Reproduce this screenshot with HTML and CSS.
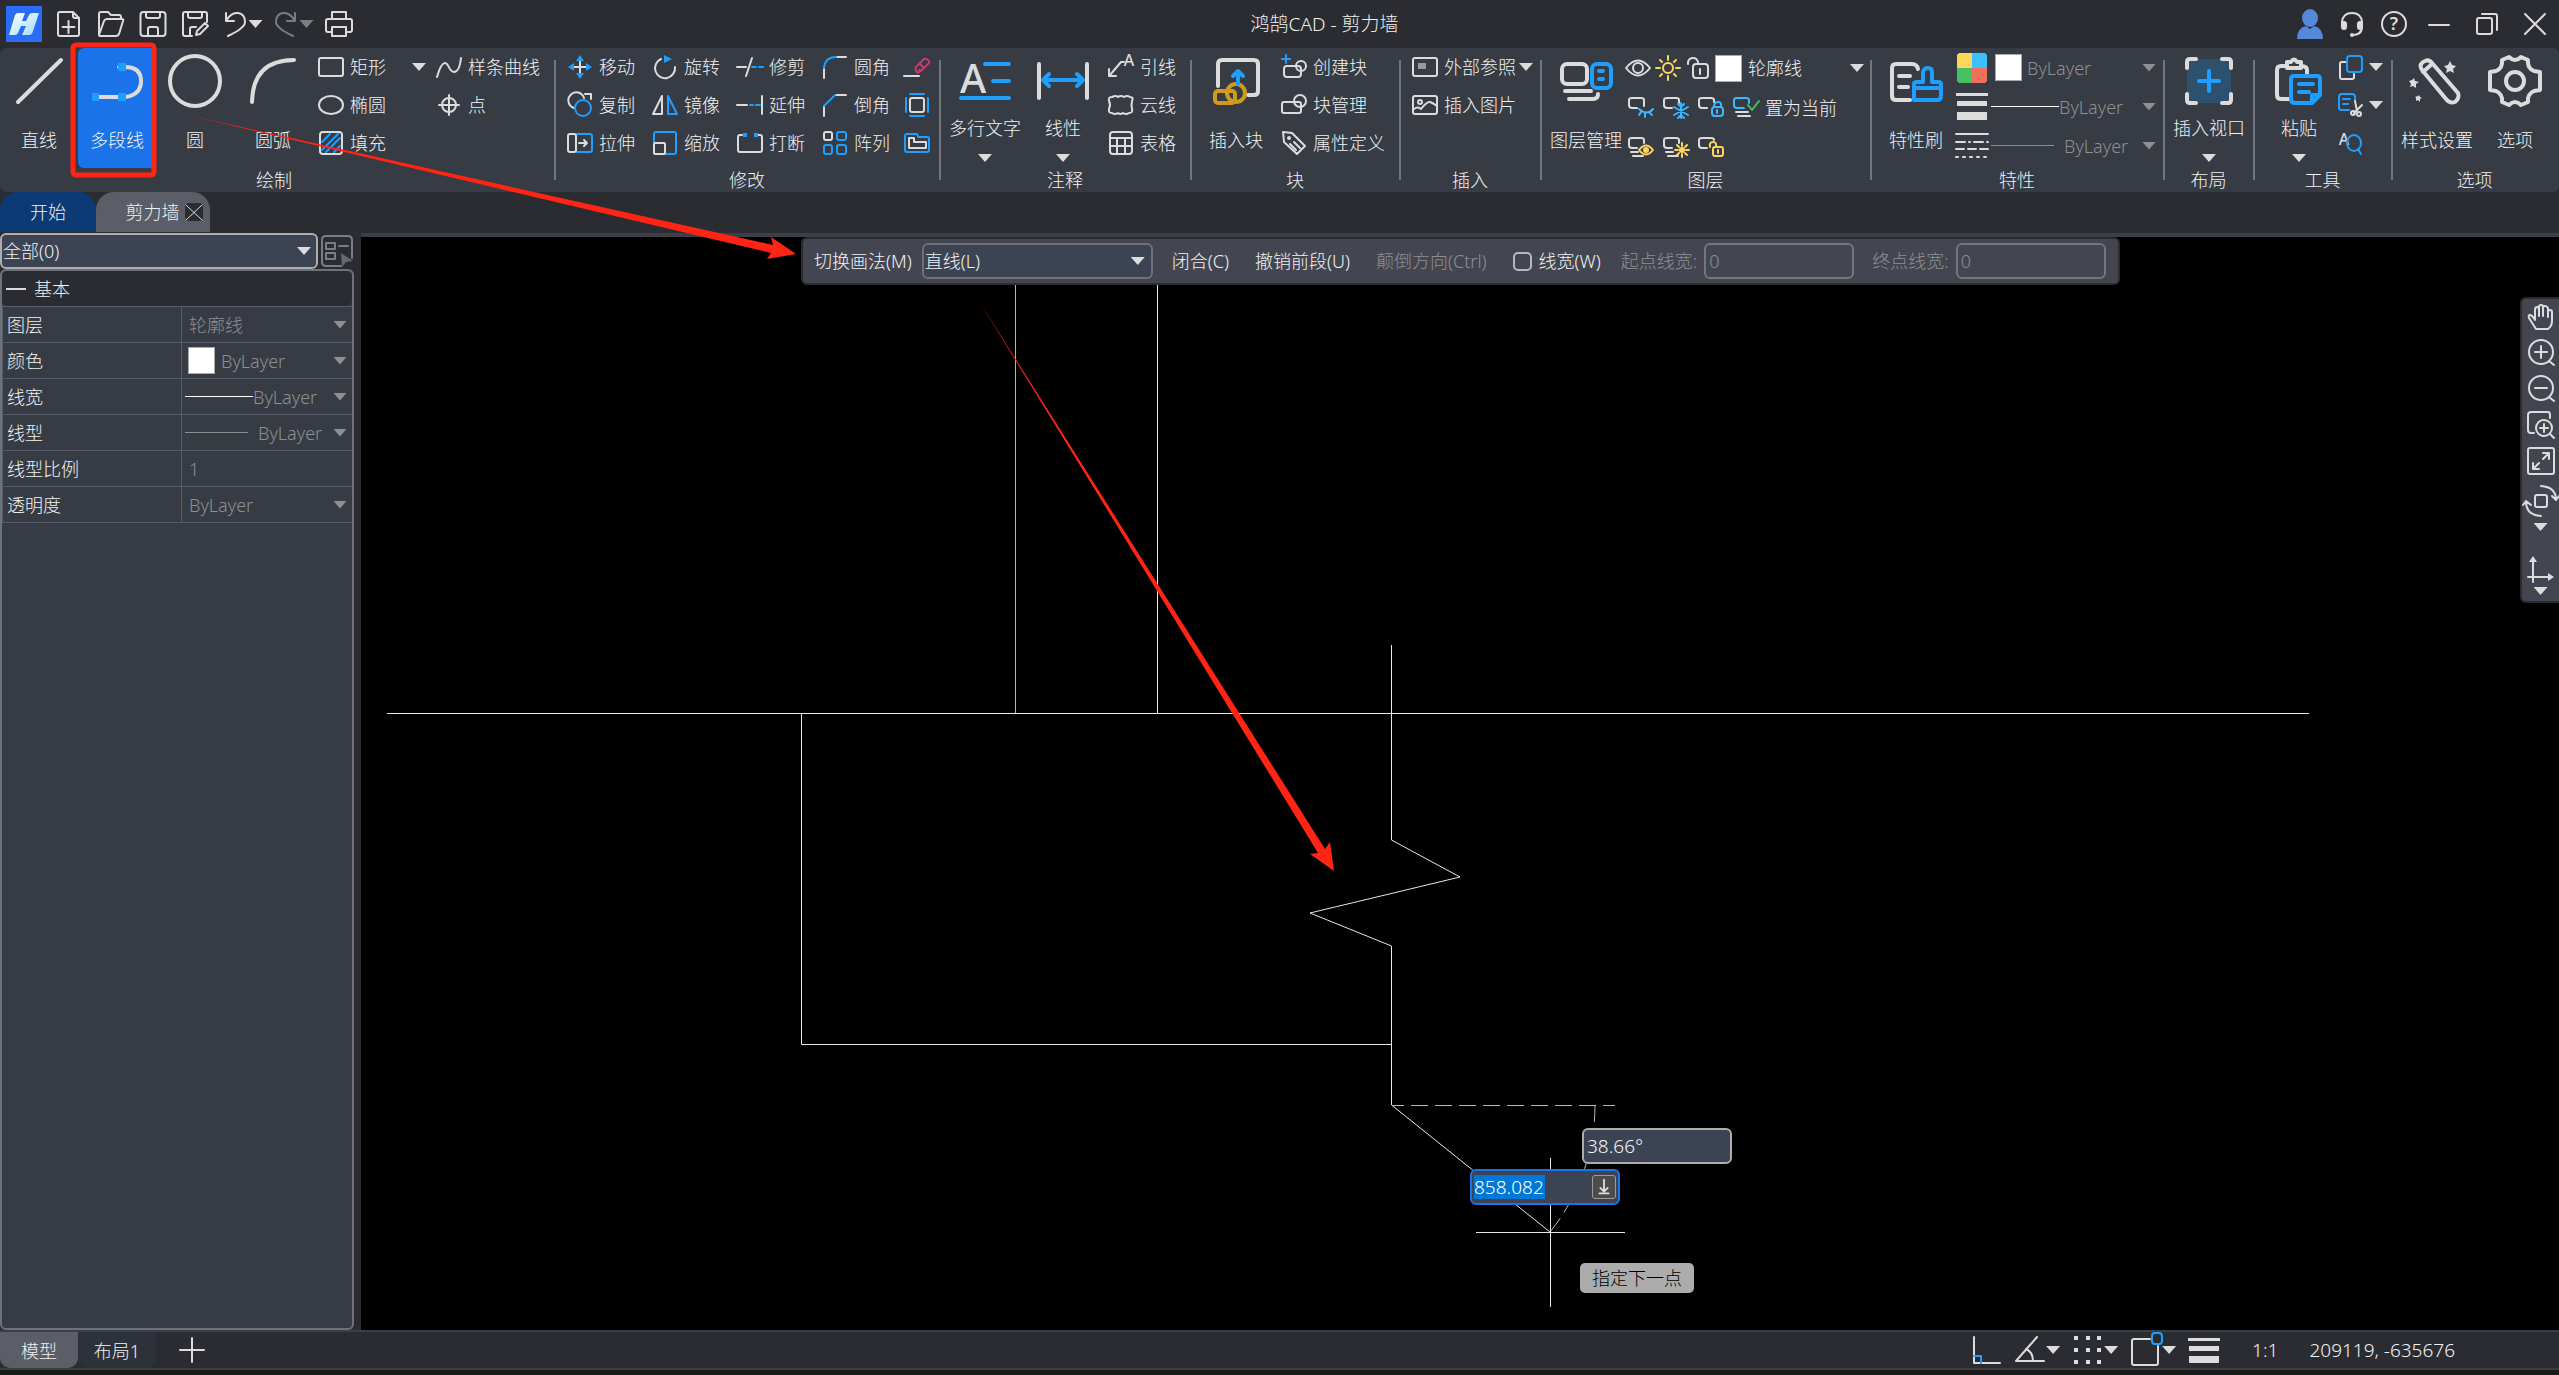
FILE: index.html
```html
<!DOCTYPE html>
<html lang="zh-CN">
<head>
<meta charset="utf-8">
<title>鸿鹄CAD - 剪力墙</title>
<link rel="stylesheet" href="styles.css">
</head>
<body>
<div class="app">
  <header class="titlebar">
    <div class="quick">
      <svg class="logo" viewBox="0 0 36 36"><defs><linearGradient id="lg" x1="0" y1="0" x2="1" y2="1"><stop offset="0" stop-color="#fff"/><stop offset="1" stop-color="#9fdcf8"/></linearGradient></defs><rect width="36" height="36" fill="#2a6cf6"/><path fill="url(#lg)" d="M9 9q1-2 3-2h7l-3 8h4l3-6q1-2 3-2h7l-6 18q-1 4-4 4h-7l4-9h-5l-3 7q-1 2-3 2H3l3-10z"/></svg>
      <button class="qb q42" aria-label="新建"><svg class="i28" viewBox="0 0 28 28"><path d="M5 2h13l6 6v16q0 2-2 2H5q-2 0-2-2V4q0-2 2-2zM18 2v4q0 2 2 2h4M13.500 11v12M7.500 17h12"/></svg></button>
      <button class="qb q42" aria-label="打开"><svg class="i28" viewBox="0 0 28 28"><path d="M2 24V4q0-2 2-2h7l3 3h8q2 0 2 2v2M2 25l5-14q1-2 3-2h15q2 0 1 2l-4 13q-1 2-3 2H4q-2 0-2-1z"/></svg></button>
      <button class="qb q42" aria-label="保存"><svg class="i28" viewBox="0 0 28 28"><rect x="1.500" y="2" width="25" height="24" rx="3"/><path d="M7 2v4q0 2 2 2h10q2 0 2-2V2M9 26v-7q0-2 2-2h6q2 0 2 2v7"/></svg></button>
      <button class="qb q42" aria-label="另存为"><svg class="i28" viewBox="0 0 28 28"><path d="M11 26H4q-2 0-2-2V4q0-2 2-2h20q2 0 2 2v8M7 2v4q0 2 2 2h10q2 0 2-2V2M9 26v-7q0-2 2-2h4M15 25l1-4 8-8 3 3-8 8z"/></svg></button>
      <button class="qb undo" aria-label="撤销"><svg class="i28" viewBox="0 0 28 28"><path d="M5 3v8h8M5 11Q10 2 17 3q7 1 7 9 0 6-17 14"/></svg><span class="tri"></span></button>
      <button class="qb redo" aria-label="重做"><svg class="i28" viewBox="0 0 28 28"><path d="M23 3v8h-8M23 11Q18 2 11 3q-7 1-7 9 0 6 17 14"/></svg><span class="tri"></span></button>
      <button class="qb q42" aria-label="打印"><svg class="i28" viewBox="0 0 28 28"><path d="M7 8V2h14v6M7 22H3q-2 0-2-2v-9q0-2 2-2h22q2 0 2 2v9q0 2-2 2h-4M7 17h14v9H7z"/></svg></button>
    </div>
    <h1 class="title">鸿鹄CAD - 剪力墙</h1>
    <div class="window">
      <button class="qb q42" aria-label="账户"><svg class="i32" viewBox="0 0 32 32"><ellipse class="user" cx="16" cy="10" rx="8" ry="9"/><path class="user" d="M3 31q0-11 9-13l4 3 4-3q9 2 9 13z"/></svg></button>
      <button class="qb q42" aria-label="客服"><svg class="i28" viewBox="0 0 28 28"><path d="M4 14v-2Q5 3 14 3t10 9v2M24 18q-1 7-9 7"/><rect class="lf" x="3" y="11" width="6" height="9" rx="3"/><rect class="lf" x="19" y="11" width="6" height="9" rx="3"/><circle class="lf" cx="14" cy="25" r="2"/></svg></button>
      <button class="qb q42" aria-label="帮助"><svg class="i28" viewBox="0 0 28 28"><circle cx="14" cy="14" r="12"/><text x="14" y="20" class="q">?</text></svg></button>
      <button class="qb q48" aria-label="最小化"><svg class="i28" viewBox="0 0 28 28"><path d="M4 15h20"/></svg></button>
      <button class="qb q48" aria-label="还原"><svg class="i28" viewBox="0 0 28 28"><rect x="4" y="8" width="15" height="16" rx="2"/><path d="M9 4h13q2 0 2 2v14"/></svg></button>
      <button class="qb q48" aria-label="关闭"><svg class="i28" viewBox="0 0 28 28"><path d="M4 4l20 20M24 4L4 24"/></svg></button>
    </div>
  </header>

  <div class="ribbon">
    <section class="group g-draw">
      <div class="body">
        <button class="big"><svg viewBox="0 0 56 56"><path d="M7 49L50 7"/></svg>直线</button>
        <button class="big active"><svg viewBox="0 0 56 56"><path d="M6 44h30q16-2 16-16T36 14h-6"/><path class="bf" d="M3 40h7v8H3zM29 40h8v8h-8zM29 10h8v8h-8z"/></svg>多段线</button>
        <button class="big"><svg viewBox="0 0 56 56"><circle cx="28" cy="28" r="25"/></svg>圆</button>
        <button class="big"><svg viewBox="0 0 56 56"><path d="M7 49Q8 7 49 7"/></svg>圆弧</button>
        <div class="stack after">
          <button class="sm"><svg viewBox="0 0 26 26"><rect x="1" y="4" width="24" height="18" rx="2"/></svg>矩形</button>
          <button class="sm"><svg viewBox="0 0 26 26"><ellipse cx="13" cy="13" rx="12" ry="9"/></svg>椭圆</button>
          <button class="sm"><svg viewBox="0 0 26 26"><rect x="2" y="2" width="22" height="22" rx="3"/><path class="b" d="M4 12l8-8M4 20L20 4M8 22L22 8M16 22l6-6"/></svg>填充</button>
        </div>
        <div class="stack mid"><button class="drop" aria-label="更多矩形"><span class="tri"></span></button></div>
        <div class="stack">
          <button class="sm"><svg viewBox="0 0 26 26"><path d="M1 23Q5 9 9 9c4 0 4 9 9 9 4 0 6-5 7-14"/></svg>样条曲线</button>
          <button class="sm"><svg viewBox="0 0 26 26"><circle cx="13" cy="13" r="7"/><path d="M13 3v20M3 13h20"/></svg>点</button>
        </div>
      </div>
      <h2>绘制</h2>
    </section>

    <section class="group g-modify">
      <div class="body">
        <div class="grid4">
          <button class="sm"><svg viewBox="0 0 26 26"><path d="M13 5v16M5 13h16"/><path class="bf" d="M13 1l4 6H9zM13 25l4-6H9zM1 13l6-4v8zM25 13l-6-4v8z"/></svg>移动</button>
          <button class="sm"><svg viewBox="0 0 26 26"><path d="M9 5A10 10 0 1 0 23 13"/><path class="bf" d="M12 1l8 4-8 4z"/></svg>旋转</button>
          <button class="sm"><svg viewBox="0 0 26 26"><path d="M0 13h9M15 4L9 22"/><path class="b" d="M15 13h4M22 13h4"/></svg>修剪</button>
          <button class="sm"><svg viewBox="0 0 26 26"><path d="M2 24V14M14 3h10"/><path class="b" d="M2 14Q3 3 14 3"/></svg>圆角</button>
          <button class="sm" aria-label="删除"><svg viewBox="0 0 26 26"><path d="M0 22h15"/><path class="pk" d="M12 13l8-8q3-1 5 2v2l-8 8q-4 3-5 0-1-2 0-4zM16 10l4 4M15 16h1"/></svg></button>
          <button class="sm"><svg viewBox="0 0 26 26"><path d="M7 16A8 8 0 1 1 17 6M18 2h6v5"/><circle class="b" cx="16" cy="16" r="8"/></svg>复制</button>
          <button class="sm"><svg viewBox="0 0 26 26"><path d="M10 4v18H1z"/><path class="b" d="M16 4v18h9z"/></svg>镜像</button>
          <button class="sm"><svg viewBox="0 0 26 26"><path d="M0 13h10M25 4v18"/><path class="b" d="M13 13h3M19 13h4"/></svg>延伸</button>
          <button class="sm"><svg viewBox="0 0 26 26"><path d="M2 24V14M14 3h10"/><path class="b" d="M2 14L13 3"/></svg>倒角</button>
          <button class="sm" aria-label="缩放框"><svg viewBox="0 0 26 26"><rect x="6" y="6" width="14" height="14" rx="2"/><path class="b" d="M6 2h14M6 24h14M2 6v14M24 6v14"/></svg></button>
          <button class="sm"><svg viewBox="0 0 26 26"><path class="b" d="M10 4h13q2 0 2 2v14q0 2-2 2H10"/><rect x="1" y="4" width="8" height="18" rx="2"/><path d="M12 13h8M17 10l3 3-3 3"/></svg>拉伸</button>
          <button class="sm"><svg viewBox="0 0 26 26"><path class="b" d="M2 12V4q0-2 2-2h18q2 0 2 2v18q0 2-2 2h-8"/><rect x="2" y="13" width="11" height="11" rx="1"/></svg>缩放</button>
          <button class="sm"><svg viewBox="0 0 26 26"><path d="M5 5H3Q1 5 1 7v13q0 2 2 2h20q2 0 2-2V7q0-2-2-2h-2"/><path class="bf" d="M6 3h4v4H6zM17 3h4v4h-4z"/></svg>打断</button>
          <button class="sm"><svg viewBox="0 0 26 26"><rect x="2" y="2" width="8" height="8" rx="2"/><rect class="b" x="15" y="2" width="9" height="8" rx="2"/><rect class="b" x="2" y="15" width="8" height="9" rx="2"/><rect class="b" x="15" y="15" width="9" height="9" rx="2"/></svg>阵列</button>
          <button class="sm" aria-label="偏移"><svg viewBox="0 0 26 26"><path class="b" d="M1 6q0-2 2-2h9q2 0 2 3h9q2 0 2 2v11q0 2-2 2H3q-2 0-2-2z"/><path d="M5 8h5v4h12v6H5z"/></svg></button>
        </div>
      </div>
      <h2>修改</h2>
    </section>

    <section class="group g-note">
      <div class="body">
        <button class="big arrow"><svg viewBox="0 0 56 56"><text class="bigA" x="16" y="40">A</text><path class="b" d="M28 11h24M36 28h16M4 45h48"/></svg>多行文字<span class="tri"></span></button>
        <button class="big arrow"><svg viewBox="0 0 56 56"><path d="M4 11v34M52 11v34"/><path class="b" d="M9 27h38M14 21l-6 6 6 6M42 21l6 6-6 6"/></svg>线性<span class="tri"></span></button>
        <div class="stack after">
          <button class="sm"><svg viewBox="0 0 26 26"><path d="M1 15v7h7M2 21L13 8h3"/><text class="smA" x="21" y="12">A</text></svg>引线</button>
          <button class="sm"><svg viewBox="0 0 26 26"><path d="M4 5q4-2 6 0 3-2 6 0 3-2 6 0 4 0 2 4-1 4 0 8 1 4-3 4-3 2-6 0-3 2-5 0-3 2-6 0-4 0-3-4 2-4 0-8-1-4 3-4z"/></svg>云线</button>
          <button class="sm"><svg viewBox="0 0 26 26"><rect x="2" y="2" width="22" height="22" rx="3"/><path d="M2 8h22M2 16h22M9 8v16M17 8v16"/></svg>表格</button>
        </div>
      </div>
      <h2>注释</h2>
    </section>

    <section class="group g-block">
      <div class="body">
        <button class="big"><svg viewBox="0 0 56 56"><path d="M10 33V11q0-4 4-4h32q4 0 4 4v27q0 4-4 4h-6"/><g class="gd"><rect x="7" y="38" width="20" height="12" rx="3"/><circle cx="28" cy="40" r="9"/></g><path class="b" d="M30 31V19M25 23l5-5 5 5"/></svg>插入块</button>
        <div class="stack after">
          <button class="sm"><svg viewBox="0 0 26 26"><path class="b" d="M5 1v8M1 5h8"/><rect x="3" y="12" width="17" height="11" rx="3"/><circle cx="20" cy="12" r="5"/></svg>创建块</button>
          <button class="sm"><svg viewBox="0 0 26 26"><rect x="1" y="10" width="19" height="11" rx="2"/><circle cx="19" cy="9" r="6"/></svg>块管理</button>
          <button class="sm"><svg viewBox="0 0 26 26"><path d="M2 2l9 1 13 13-8 8L3 12zM9 14l6 6M13 12l6 6"/><circle class="lf" cx="8" cy="8" r="2"/></svg>属性定义</button>
        </div>
      </div>
      <h2>块</h2>
    </section>

    <section class="group g-insert">
      <div class="body">
        <div class="stack">
          <button class="sm"><svg viewBox="0 0 26 26"><rect x="1" y="4" width="24" height="18" rx="2"/><path class="gf" d="M6 9h8v6H6z"/></svg>外部参照<span class="tri"></span></button>
          <button class="sm"><svg viewBox="0 0 26 26"><rect x="1" y="4" width="24" height="18" rx="2"/><circle cx="8" cy="10" r="2"/><path d="M2 17q4-3 7 0 6-8 9-7t7 4"/></svg>插入图片</button>
        </div>
      </div>
      <h2>插入</h2>
    </section>

    <section class="group g-layer">
      <div class="body">
        <button class="big"><svg viewBox="0 0 56 56"><rect x="4" y="11" width="25" height="20" rx="5"/><rect class="b" x="34" y="11" width="19" height="24" rx="5"/><path class="b" d="M41 18h4M41 26h4"/><path d="M7 38h26M11 46h24q5 0 5-5"/></svg>图层管理</button>
        <div class="rows">
          <div class="row">
            <button class="ic ic30" aria-label="显示"><svg viewBox="0 0 26 26"><path d="M1 13Q13-2 25 13 13 28 1 13z"/><circle cx="13" cy="13" r="5"/></svg></button>
            <button class="ic ic30" aria-label="冻结"><svg viewBox="0 0 26 26"><g class="yl"><circle cx="13" cy="13" r="5"/><path d="M13 1v4M13 21v4M1 13h4M21 13h4M5 5l2 2M19 19l2 2M5 21l2-2M19 7l2-2"/></g></svg></button>
            <button class="ic ic30" aria-label="锁定"><svg viewBox="0 0 26 26"><rect x="8" y="9" width="15" height="14" rx="3"/><path d="M3 9V7q1-4 5-4t5 4v2M15 14v5"/></svg></button>
            <span class="swatch"></span>
            <select class="flat" aria-label="图层"><option>轮廓线</option></select><span class="tri"></span>
          </div>
          <div class="row inset">
            <button class="ic ic35" aria-label="隐藏图层"><svg viewBox="0 0 26 26"><path d="M9 13H4q-3 0-3-3V5q0-2 3-2h9q3 0 3 2v6"/><path class="c" d="M11 14q8 7 14 0M13 17l-2 3M17 18v4M21 17l3 3"/></svg></button>
            <button class="ic ic35" aria-label="冻结图层"><svg viewBox="0 0 26 26"><path d="M9 13H4q-3 0-3-3V5q0-2 3-2h9q3 0 3 2v3"/><path class="c" d="M18 8v15M11 12l14 8M11 20l14-8M15 9l3 3 3-3M15 23l3-3 3 3"/></svg></button>
            <button class="ic ic35" aria-label="锁定图层"><svg viewBox="0 0 26 26"><path d="M9 13H4q-3 0-3-3V5q0-2 3-2h9q3 0 3 2v2"/><g class="c"><rect x="14" y="12" width="11" height="9" rx="3"/><path d="M16 12q0-5 4-5t3 5M19 15v3"/></g></svg></button>
            <button class="sm"><svg viewBox="0 0 26 26"><path class="c" d="M11 13H4q-3 0-3-3V5q0-2 3-2h9q3 0 3 2v3"/><path d="M3 17h12M5 21h12"/><path class="gn" d="M15 10l4 5 7-9"/></svg>置为当前</button>
          </div>
          <div class="row inset">
            <button class="ic ic35" aria-label="显示图层"><svg viewBox="0 0 26 26"><path d="M9 13H4q-3 0-3-3V5q0-2 3-2h9q3 0 3 2v3M3 17h7M5 21h10"/><path class="yl" d="M11 15q7-9 14 0-7 9-14 0z"/><circle class="yf" cx="18" cy="15" r="3"/></svg></button>
            <button class="ic ic35" aria-label="解冻图层"><svg viewBox="0 0 26 26"><path d="M9 13H4q-3 0-3-3V5q0-2 3-2h9q3 0 3 2v3M3 17h7M5 21h10"/><circle class="yf" cx="19" cy="15" r="3"/><path class="yl" d="M19 8v3M19 19v3M12 15h3M23 15h3M14 10l2 2M22 18l2 2M14 20l2-2M22 12l2-2"/></svg></button>
            <button class="ic ic35" aria-label="解锁图层"><svg viewBox="0 0 26 26"><path d="M9 13H4q-3 0-3-3V5q0-2 3-2h9q3 0 3 2"/><g class="yl"><rect x="15" y="12" width="10" height="9" rx="2"/><path d="M12 12q-1-5 3-5t3 5M20 15v3"/></g></svg></button>
          </div>
        </div>
      </div>
      <h2>图层</h2>
    </section>

    <section class="group g-prop">
      <div class="body">
        <button class="big"><svg viewBox="0 0 56 56"><path d="M22 47H8q-4 0-4-4V15q0-4 4-4h16q5 0 6 5M11 23h11M11 34h9"/><path class="b" d="M26 47V31q0-2 3-2h6V19q1-4 5-4t4 4v10h6q3 0 3 2v12q0 4-4 4zM27 35h25"/></svg>特性刷</button>
        <div class="rows">
          <div class="row">
            <svg class="pi tiles" viewBox="0 0 34 34"><path fill="#ffd65c" d="M4 2h13v15H2V4z"/><path fill="#3cc0ff" d="M17 2h13l2 2v13H17z"/><path fill="#45c064" d="M2 17h15v15H4l-2-2z"/><path fill="#f0705a" d="M17 17h15v13l-2 2H17z"/></svg>
            <span class="swatch"></span>
            <select class="flat off" aria-label="颜色"><option>ByLayer</option></select><span class="tri dim"></span>
          </div>
          <div class="row">
            <svg class="pi" viewBox="0 0 34 34"><path class="lf" d="M1 3h32v3H1zM2 11h30v5H2zM2 22h30v8H2z"/></svg>
            <span class="rule"></span>
            <select class="flat off" aria-label="线宽"><option>ByLayer</option></select><span class="tri dim"></span>
          </div>
          <div class="row">
            <svg class="pi" viewBox="0 0 34 34"><path d="M1 5h32"/><path stroke-dasharray="9 4 1 4" d="M1 13h32"/><path stroke-dasharray="8 4" d="M1 20h32"/><path stroke-dasharray="2 5" d="M1 28h32"/></svg>
            <span class="rule gray"></span>
            <select class="flat off" aria-label="线型"><option>ByLayer</option></select><span class="tri dim"></span>
          </div>
        </div>
      </div>
      <h2>特性</h2>
    </section>

    <section class="group g-layout">
      <div class="body">
        <button class="big arrow"><svg viewBox="0 0 56 56"><rect class="bt" x="6" y="6" width="44" height="44"/><path d="M6 15V9q0-3 3-3h6M41 6h6q3 0 3 3v6M50 41v6q0 3-3 3h-6M15 50H9q-3 0-3-3v-6"/><path class="b" d="M28 18v20M18 28h20"/></svg>插入视口<span class="tri"></span></button>
      </div>
      <h2>布局</h2>
    </section>

    <section class="group g-tool">
      <div class="body">
        <button class="big arrow"><svg viewBox="0 0 56 56"><path d="M18 46H10q-4 0-4-4V17q0-4 4-4h4M30 13q6 0 6 4v3"/><path d="M16 9v6h14V9h-4q-3-5-6 0z"/><path class="b" d="M20 46V26q0-3 3-3h23q3 0 3 3v16l-8 8H24q-4 0-4-4zM28 31h14M28 39h10M49 42h-8v8"/></svg>粘贴<span class="tri"></span></button>
        <div class="stack">
          <button class="sm tight" aria-label="复制选项"><svg viewBox="0 0 26 26"><path d="M8 8H4Q2 8 2 10v13q0 2 2 2h10q2 0 2-2v-3"/><rect class="b" x="9" y="2" width="15" height="16" rx="3"/></svg><span class="tri"></span></button>
          <button class="sm tight" aria-label="剪切选项"><svg viewBox="0 0 26 26"><path class="b" d="M11 18H4q-3 0-3-2V5q0-3 3-3h10q3 0 3 3v4M5 7h7M5 12h5"/><path d="M17 9l2 10M24 13l-8 8"/><circle cx="15" cy="21" r="2"/><circle cx="21" cy="22" r="2"/></svg><span class="tri"></span></button>
          <button class="sm tight" aria-label="查找文字"><svg viewBox="0 0 26 26"><text class="smA" x="6" y="15">A</text><ellipse class="b" cx="16" cy="13" rx="7" ry="8"/><path class="b" d="M20 19l3 5"/></svg></button>
        </div>
      </div>
      <h2>工具</h2>
    </section>

    <section class="group g-opt">
      <div class="body">
        <button class="big"><svg viewBox="0 0 56 56"><path d="M13 17q-4-6 3-9 4-2 7 2l26 30q2 5-3 9-5 2-9-3zM14 19l9-8"/><path class="lf" d="M41 8l2 4 4 1-3 3 1 4-4-2-4 2 1-4-3-3 4-1zM5 25l1 3 4 1-3 2v4l-3-2-3 1 1-3-2-3 3-1zM10 42l1 2 2 1-2 1v3l-2-2-2 1v-3l-1-1 3-1z"/></svg>样式设置</button>
        <button class="big"><svg viewBox="0 0 56 56"><path d="M22 4q6 6 12 0l7 3q-1 8 6 11l6 1v18l-6 1q-7 3-6 11l-7 3q-6-6-12 0l-7-3q1-8-6-11l-6-1V19l6-1q7-3 6-11z"/><circle cx="28" cy="28" r="9"/></svg>选项</button>
      </div>
      <h2>选项</h2>
    </section>
  </div>

  <nav class="tabs">
    <a class="tab home" href="#start">开始</a>
    <a class="tab doc" href="#doc">剪力墙<svg class="x" viewBox="0 0 18 18"><rect width="18" height="18" rx="4"/><path d="M1 2l16 15M17 2L1 17"/></svg></a>
  </nav>

  <main class="work">
    <aside class="side">
      <div class="pick">
        <div class="box all"><select aria-label="选择对象"><option>全部(0)</option></select><span class="tri"></span></div>
        <button class="pickbtn" aria-label="快速选择"><svg viewBox="0 0 32 32"><path d="M20 31H5q-4 0-4-4V5q0-4 4-4h22q4 0 4 4v18M5 8h9v6H5zM5 18h9v6H5zM18 11h9"/><path class="cur" d="M20 18l12 8-7 1-4 5z"/></svg></button>
      </div>
      <div class="props">
        <h3><span class="minus"></span>基本</h3>
        <table>
          <tr><th scope="row">图层</th><td><div class="cell ind"><select class="flat off" aria-label="图层"><option>轮廓线</option></select><span class="tri dim"></span></div></td></tr>
          <tr><th scope="row">颜色</th><td><div class="cell"><span class="swatch first"></span><select class="flat off" aria-label="颜色"><option>ByLayer</option></select><span class="tri dim"></span></div></td></tr>
          <tr><th scope="row">线宽</th><td><div class="cell"><span class="rule"></span><select class="flat off" aria-label="线宽"><option>ByLayer</option></select><span class="tri dim"></span></div></td></tr>
          <tr><th scope="row">线型</th><td><div class="cell"><span class="rule gray"></span><select class="flat off" aria-label="线型"><option>ByLayer</option></select><span class="tri dim"></span></div></td></tr>
          <tr><th scope="row">线型比例</th><td><div class="cell ind"><input class="flat off" aria-label="线型比例" value="1"></div></td></tr>
          <tr><th scope="row">透明度</th><td><div class="cell ind"><select class="flat off" aria-label="透明度"><option>ByLayer</option></select><span class="tri dim"></span></div></td></tr>
        </table>
      </div>
    </aside>

    <div class="canvas">
      <svg class="drawing" aria-hidden="true">
        <g transform="translate(-361 -237)">
          <path d="M387 713.500H2309M1157.500 237V713M801.500 713V1044.500H1391.500M1391.500 645V840L1460 877 1310 913 1391.500 946V1105L1550 1232"/>
          <path class="half" d="M1015.500 237V713"/>
          <path class="dash" stroke-dashoffset="5" d="M1392 1105.500H1615"/>
          <path class="dash" d="M1595 1105A203 203 0 0 1 1550 1232"/>
          <path d="M1550.500 1158V1307M1476 1232.500H1625"/>
        </g>
      </svg>

      <form class="cmd">
        <label for="mode">切换画法(M)</label>
        <div class="box mode"><select id="mode"><option>直线(L)</option></select><span class="tri"></span></div>
        <button type="button" class="txt">闭合(C)</button>
        <button type="button" class="txt">撤销前段(U)</button>
        <button type="button" class="txt" disabled>颠倒方向(Ctrl)</button>
        <input type="checkbox" id="lw"><label for="lw" class="lw">线宽(W)</label>
        <label class="off" for="w1">起点线宽:</label><input class="num" id="w1" value="0" disabled>
        <label class="off" for="w2">终点线宽:</label><input class="num" id="w2" value="0" disabled>
      </form>

      <div class="view">
        <button aria-label="平移"><svg viewBox="0 0 28 28"><path d="M9 26L2 15q-1-3 1-3t5 5V7q0-3 2-3t2 3v6V4q0-2 2-2t2 2v9V5q0-2 2-2t3 2v9V9q0-2 2-2t2 2v9q0 5-4 8z"/></svg></button>
        <button aria-label="放大"><svg viewBox="0 0 28 28"><circle cx="14" cy="13" r="12"/><path d="M14 7v12M8 13h12M22 22l5 4"/></svg></button>
        <button aria-label="缩小"><svg viewBox="0 0 28 28"><circle cx="14" cy="13" r="12"/><path d="M8 13h12M22 22l5 4"/></svg></button>
        <button aria-label="窗口缩放"><svg viewBox="0 0 28 28"><path d="M7 22H4q-3 0-3-3V4q0-3 3-3h17q2 0 2 3v3"/><circle cx="17" cy="17" r="8"/><path d="M17 13v8M13 17h8M23 23l4 4"/></svg></button>
        <button aria-label="全图"><svg viewBox="0 0 28 28"><rect x="1" y="1" width="26" height="26" rx="2"/><path d="M16 6h6v6M22 6l-6 6M6 16v6h6M6 22l6-6"/></svg></button>
        <button class="tall" aria-label="旋转视图"><svg class="wide" viewBox="0 0 36 36"><rect x="12" y="12" width="12" height="12" rx="2"/><path d="M18 3q15 1 15 14M29 13l4 4 3-4M18 33Q3 32 3 19M0 22l3-4 5 4"/></svg><span class="tri"></span></button>
        <button class="tall low" aria-label="坐标系"><svg viewBox="0 0 28 28"><path d="M6 27V4M1 22h22"/><path class="lf" d="M6 1l4 6H2zM27 22l-6-4v8z"/></svg><span class="tri"></span></button>
      </div>

      <input class="angle" aria-label="角度" value="38.66°">
      <div class="dist"><input aria-label="距离" value="858.082"><button aria-label="选项"><svg viewBox="0 0 24 24"><path d="M12 4v13M8 13l4 4 4-4M7 19h10"/></svg></button></div>
      <div class="tip">指定下一点</div>
    </div>
  </main>

  <footer class="status">
    <nav class="sheets"><a class="on" href="#model">模型</a><a href="#layout1">布局1</a><button aria-label="新建布局"><svg viewBox="0 0 24 24"><path d="M12 0v24M0 12h24"/></svg></button></nav>
    <div class="modes">
      <button aria-label="正交"><svg viewBox="0 0 32 32"><path d="M3 3v26h26"/><path class="b" d="M3 22h7v7"/></svg></button>
      <button class="sp" aria-label="极轴"><svg viewBox="0 0 32 32"><path d="M23 3L2 27h28M12 15q7 3 7 12"/></svg><span class="tri"></span></button>
      <button class="sp" aria-label="栅格"><svg viewBox="0 0 32 32"><path class="lf" d="M2 2h4v4H2zM14 2h4v4h-4zM25 2h4v4h-4zM2 14h4v4H2zM14 14h4v4h-4zM25 14h4v4h-4zM2 26h4v4H2zM14 26h4v4h-4zM25 26h4v4h-4z"/></svg><span class="tri"></span></button>
      <button class="sp" aria-label="对象捕捉"><svg viewBox="0 0 32 32"><path d="M20 5H4Q2 5 2 7v22q0 2 2 2h22q2 0 2-2V12"/><rect class="b" x="22" y="-1" width="10" height="11" rx="3"/></svg><span class="tri"></span></button>
      <button aria-label="线宽"><svg viewBox="0 0 32 32"><path class="lf" d="M0 4h32v3H0zM1 12h30v5H1zM1 22h30v7H1z"/></svg></button>
      <span class="ratio">1:1</span>
      <output class="coord">209119, -635676</output>
    </div>
  </footer>
  <div class="edge"></div>

  <svg class="marks" aria-hidden="true">
    <rect x="73" y="45" width="81" height="130" rx="3"/>
    <path d="M183 114L773 245 771 237 796 254 767 259 771 253z"/>
    <path d="M979 301L1325 849 1330 842 1334 871 1310 854 1318 853z"/>
  </svg>
</div>
</body>
</html>
```
FILE: styles.css
```css
* { box-sizing: border-box; }

:root {
  --bar: #2b2c31;
  --panel: #363b44;
  --field: #3c4453;
  --float: #434650;
  --ink: #dcdcdc;
  --dim: #8d8f92;
  --blue: #1e9fff;
}

body {
  margin: 0;
  background: var(--bar);
  color: #f2f2f2;
  font: 300 18px/24px "Noto Sans", "Noto Sans CJK SC", sans-serif;
}

button, select, input {
  margin: 0;
  padding: 0;
  border: 0;
  background: none;
  color: inherit;
  font: inherit;
}

select { appearance: none; flex: 1; min-width: 0; height: 28px; }
select:disabled, button:disabled, input:disabled { color: var(--dim); opacity: 1; }
a { color: inherit; text-decoration: none; }
h1, h2, h3 { margin: 0; font: inherit; }

svg {
  display: block;
  flex: none;
  fill: none;
  stroke: var(--ink);
  stroke-width: 2;
  stroke-linecap: round;
  stroke-linejoin: round;
  overflow: visible;
}
.b { stroke: var(--blue); }
.c { stroke: #3cb8ff; }
.pk { stroke: #c83a6a; }
.gd { stroke: #d09a1c; }
.yl { stroke: #ffd65c; }
.gn { stroke: #45c064; }
.bf { fill: var(--blue); stroke: none; }
.lf { fill: var(--ink); stroke: none; }
.gf { fill: #9a9a9a; stroke: none; }
.yf { fill: #ffd65c; stroke: none; }
.bt { fill: #2d506e; stroke: none; }
.user { fill: #5488d8; stroke: none; }
svg text { fill: var(--ink); stroke: none; text-anchor: middle; font-family: "Noto Sans", sans-serif; }
.q { font-size: 18px; font-weight: 600; }
.bigA { font-size: 40px; font-weight: 500; }
.smA { font-size: 16px; font-weight: 500; }

.tri {
  flex: none;
  width: 14px;
  height: 8px;
  background: var(--ink);
  clip-path: polygon(0 0, 100% 0, 50% 100%);
}
.dim { background: var(--dim); }
.off { color: var(--dim); }

.app { position: relative; display: flex; flex-direction: column; min-height: 100vh; }

/* title bar */
.titlebar { display: flex; align-items: center; height: 48px; }
.quick { display: flex; align-items: center; padding-left: 6px; width: 360px; }
.logo { width: 36px; height: 36px; margin-right: 6px; stroke: none; }
.qb { display: flex; align-items: center; justify-content: center; height: 48px; }
.q42 { width: 42px; }
.q48 { width: 48px; }
.undo, .redo { width: 51px; }
.redo svg { stroke: #7b7d80; }
.redo .tri { background: #7b7d80; }
.i28 { width: 28px; height: 28px; }
.i32 { width: 32px; height: 32px; }
.title { flex: 1; text-align: center; font-size: 19px; }
.window { display: flex; }

/* ribbon */
.ribbon { display: flex; height: 144px; background: var(--panel); border-radius: 6px; }
.group { position: relative; display: flex; flex-direction: column; flex: none; }
.group::after {
  content: "";
  position: absolute;
  right: 0;
  top: 12px;
  width: 2px;
  height: 120px;
  background: #72757b;
}
.group:last-child::after { display: none; }
.group h2 { padding-right: 8px; text-align: center; }
.body { display: flex; height: 120px; }
.g-draw { width: 556px; }
.g-modify { width: 385px; padding-left: 11px; }
.g-note { width: 251px; padding-left: 5px; }
.g-block { width: 209px; padding-left: 5px; }
.g-insert { width: 141px; padding-left: 11px; }
.g-layer { width: 330px; padding-left: 5px; }
.g-prop { width: 293px; padding-left: 5px; }
.g-layout { width: 90px; padding-left: 5px; }
.g-tool { width: 138px; padding-left: 5px; }
.g-opt { flex: 1; padding-left: 5px; }
.g-modify h2, .g-insert h2 { padding-right: 14px; }

.big {
  display: flex;
  flex-direction: column;
  align-items: center;
  flex: none;
  width: 78px;
  height: 120px;
  padding-top: 5px;
  gap: 19px;
  white-space: nowrap;
}
.big svg { width: 56px; height: 56px; stroke-width: 4; }
.big.arrow { gap: 7px; }
.big .tri { margin-top: 7px; }
.active { background: #1a73e8; border-radius: 6px; }

.stack { display: flex; flex-direction: column; }
.after { padding-left: 6px; }
.sm { display: flex; align-items: center; gap: 6px; height: 38px; white-space: nowrap; }
.sm svg, .ic svg { width: 26px; height: 26px; }
.sm .tri { margin-left: -3px; }
.tight { gap: 5px; }
.tight .tri { margin-left: 0; }
.drop { display: flex; align-items: center; justify-content: center; height: 38px; width: 26px; }
.mid { margin: 0 4px 0 20px; }
.grid4 { display: grid; grid-template-columns: repeat(4, 85px) 26px; grid-auto-rows: 38px; }
.grid4 .sm:nth-child(5n) { margin-left: -3px; }

.rows { display: flex; flex-direction: column; flex: 1; }
.row { display: flex; align-items: center; height: 40px; padding-right: 8px; }
.inset { padding-left: 3px; }
.ic { display: flex; align-items: center; }
.ic30 { width: 30px; }
.ic35 { width: 35px; }
.swatch { flex: none; width: 27px; height: 27px; margin-right: 6px; background: #fff; border: 1px solid #aaa; }
.g-prop .row { height: 39px; padding-right: 9px; }
.g-prop .swatch { margin: 0 5px 0 4px; }
.pi { width: 34px; height: 34px; margin-right: 2px; }
.tiles { stroke: none; }
.rule { flex: none; width: 68px; height: 1px; background: #fff; }
.rule.gray { width: 63px; margin-right: 10px; background: #8c8f90; }

/* document tabs */
.tabs { display: flex; height: 41px; }
.tab { display: flex; align-items: center; justify-content: center; height: 40px; border-radius: 18px 18px 0 0; }
.home { width: 96px; background: #0b3a74; }
.doc { width: 114px; padding-left: 22px; gap: 5px; background: #5b5e66; }
.x { width: 18px; height: 18px; stroke-width: 1; }
.x rect { fill: var(--bar); stroke: none; }

/* properties panel */
.work { display: flex; flex: 1; }
.side { display: flex; flex-direction: column; width: 361px; padding-right: 7px; }
.pick { display: flex; align-items: center; gap: 3px; }
.box { display: flex; align-items: center; height: 36px; padding: 0 6px 0 1px; background: var(--field); border: 2px solid #707174; border-radius: 6px; }
.all { width: 318px; border-color: #adadad; padding-right: 5px; }
.pickbtn svg { width: 32px; height: 32px; stroke: #7b7d82; }
.cur { fill: #66686d; stroke: none; }
.props { flex: 1; background: var(--panel); border: 2px solid #6e727a; border-radius: 6px; }
.props h3 { display: flex; align-items: center; gap: 8px; height: 35px; padding-left: 4px; background: var(--bar); border-radius: 6px; }
.minus { width: 20px; height: 2px; background: var(--ink); }
.props table { width: 100%; border-collapse: collapse; table-layout: fixed; }
.props th, .props td { height: 36px; padding: 0; border: 1px solid #565c69; font-weight: 300; text-align: left; }
.props th { width: 179px; padding-left: 4px; }
.props td { border-right: 0; }
.cell { display: flex; align-items: center; padding: 0 5px 0 3px; }
.ind { padding-left: 7px; }
.cell .swatch { margin-left: 3px; }
.cell input { width: 100%; }

/* drawing area */
.canvas { position: relative; flex: 1; background: #000; border-top: 4px solid #3c3f47; }
.drawing { position: absolute; left: 0; top: 0; width: 100%; height: 100%; overflow: hidden; stroke: #e8e8e8; stroke-width: 1; stroke-linecap: butt; }
.half { stroke: #b4b4b4; }
.dash { stroke: #b8b8b8; stroke-dasharray: 17 7; }

.cmd {
  position: absolute;
  left: 440px;
  top: 0;
  display: flex;
  align-items: center;
  height: 48px;
  padding: 0 12px 0 11px;
  background: var(--float);
  border: 2px solid var(--bar);
  border-radius: 6px;
  white-space: nowrap;
}
.mode { width: 231px; margin: 0 19px 0 10px; }
.txt { margin-right: 26px; }
.cmd input[type="checkbox"] { appearance: none; width: 19px; height: 19px; margin-right: 7px; border: 2px solid #b8b8b8; border-radius: 5px; }
.lw { margin-right: 20px; }
.num { width: 150px; height: 36px; margin: 0 18px 0 7px; padding-left: 3px; border: 2px solid #74767c; border-radius: 6px; }
.num:last-child { margin-right: 0; }

.view {
  position: absolute;
  right: 0;
  top: 60px;
  display: flex;
  flex-direction: column;
  width: 39px;
  padding: 0 0 6px;
  background: var(--float);
  border: 2px solid var(--bar);
  border-right: 0;
  border-radius: 6px 0 0 6px;
}
.view button { display: flex; flex-direction: column; align-items: center; justify-content: center; height: 36px; }
.view svg { width: 28px; height: 28px; }
.view .wide { width: 36px; height: 36px; }
.view .tall { height: 56px; gap: 4px; }
.view .low { height: 60px; justify-content: flex-end; }

.angle, .dist { position: absolute; width: 150px; height: 36px; background: var(--field); border: 2px solid #adadad; border-radius: 6px; font-size: 19px; }
.angle { left: 1221px; top: 891px; padding-left: 3px; }
.dist { left: 1109px; top: 932px; display: flex; align-items: center; justify-content: space-between; padding: 0 2px; border-color: #1a73e8; }
.dist input { width: 71px; height: 24px; background: #0078d7; color: #fff; }
.dist svg { width: 24px; height: 24px; background: #4c4c4c; border: 1px solid #9a9a9a; border-radius: 3px; }
.tip { position: absolute; left: 1219px; top: 1026px; padding: 3px 12px; background: #acacac; color: #000; border-radius: 5px; }

/* status bar */
.status { display: flex; justify-content: space-between; height: 38px; border-top: 2px solid #3a3e48; }
.sheets { display: flex; align-items: center; }
.sheets a { width: 78px; height: 36px; padding-top: 7px; background: #2d3139; text-align: center; border-radius: 0 0 10px 10px; }
.sheets .on { background: #5b5e66; }
.sheets svg { width: 24px; height: 24px; margin-left: 24px; }
.modes { display: flex; align-items: center; padding-right: 104px; font-size: 19px; }
.modes button { display: flex; align-items: center; }
.modes svg { width: 32px; height: 32px; }
.modes .sp { width: 58px; }
.modes button:first-child { width: 43px; }
.ratio { margin: 0 31px 0 32px; }
.edge { height: 7px; background: #1b1b1b; border-top: 2px solid #3e3f42; }

/* red call-outs over the whole window */
.marks { position: absolute; left: 0; top: 0; width: 100%; height: 100%; pointer-events: none; overflow: hidden; }
.marks rect { stroke: #ff2414; stroke-width: 5; }
.marks path { fill: #ff2414; stroke: none; }
```
